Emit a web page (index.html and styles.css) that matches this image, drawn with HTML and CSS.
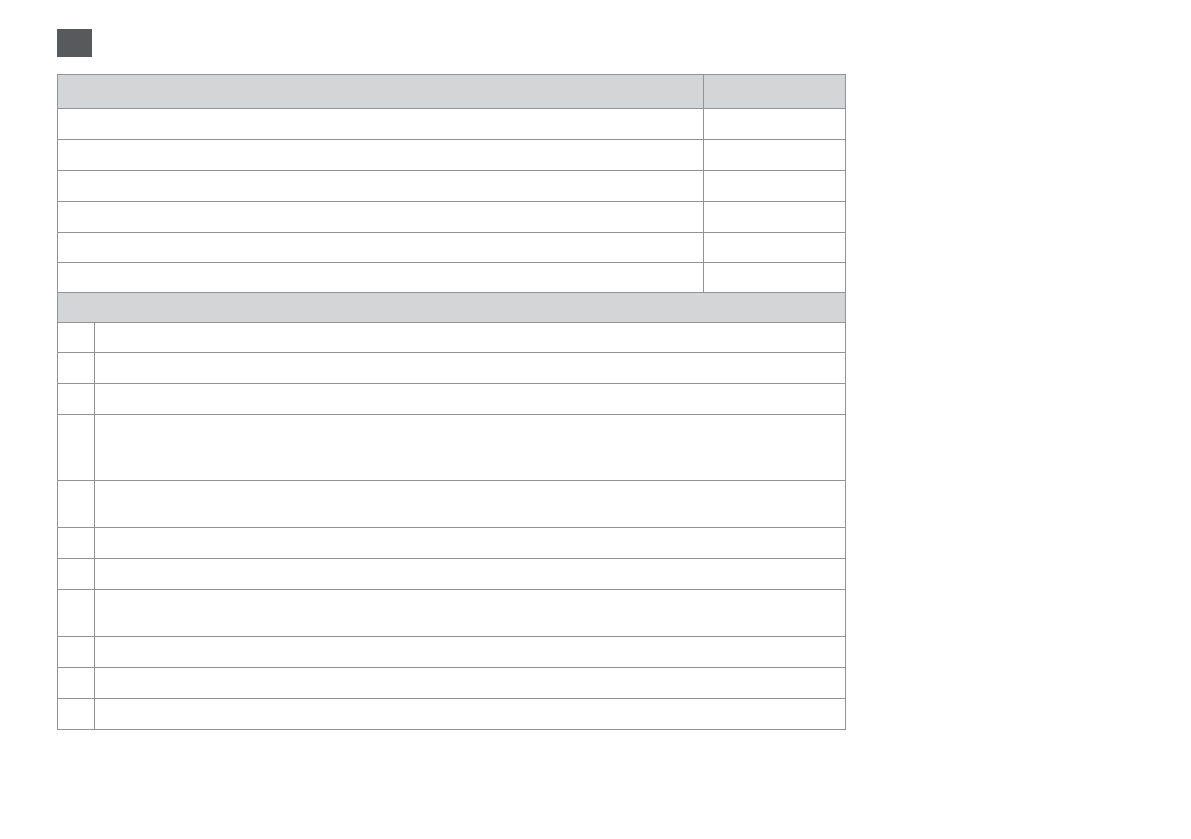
FILE: index.html
```html
<!DOCTYPE html>
<html>
<head>
<meta charset="utf-8">
<link rel="stylesheet" href="styles.css">
</head>
<body>
<div class="page">
  <div class="tab"></div>
  <div class="tbl">
    <div class="row head top"><div class="c-main"></div><div class="c-side"></div></div>
    <div class="row top h31"><div class="c-main"></div><div class="c-side"></div></div>
    <div class="row top h31"><div class="c-main"></div><div class="c-side"></div></div>
    <div class="row top h31"><div class="c-main"></div><div class="c-side"></div></div>
    <div class="row top h31"><div class="c-main"></div><div class="c-side"></div></div>
    <div class="row top h30"><div class="c-main"></div><div class="c-side"></div></div>
    <div class="row top h30"><div class="c-main"></div><div class="c-side"></div></div>
    <div class="row head2 h30"></div>
    <div class="row list h30"><div class="c-num"></div><div class="c-text"></div></div>
    <div class="row list h31"><div class="c-num"></div><div class="c-text"></div></div>
    <div class="row list h31"><div class="c-num"></div><div class="c-text"></div></div>
    <div class="row list h66"><div class="c-num"></div><div class="c-text"></div></div>
    <div class="row list h47"><div class="c-num"></div><div class="c-text"></div></div>
    <div class="row list h31"><div class="c-num"></div><div class="c-text"></div></div>
    <div class="row list h31"><div class="c-num"></div><div class="c-text"></div></div>
    <div class="row list h47"><div class="c-num"></div><div class="c-text"></div></div>
    <div class="row list h31"><div class="c-num"></div><div class="c-text"></div></div>
    <div class="row list h31"><div class="c-num"></div><div class="c-text"></div></div>
    <div class="row list h31"><div class="c-num"></div><div class="c-text"></div></div>
  </div>
</div>
</body>
</html>
```

FILE: styles.css
```css
html, body {
  margin: 0;
  padding: 0;
  background: #ffffff;
  font-family: "Liberation Sans", Arial, sans-serif;
}

.page {
  padding: 29px 0 0 57px;
}

.tab {
  width: 35px;
  height: 28px;
  background: #58595b;
}

.tbl {
  margin-top: 17px;
  width: 789px;
  box-sizing: border-box;
  border: 1px solid #939393;
  border-top: 0;
  display: flex;
  flex-direction: column;
}

.row {
  display: flex;
  box-sizing: border-box;
  border-top: 1px solid #939393;
}

.row.head {
  height: 34px;
  background: #d4d5d7;
}

.row.head2 {
  background: #d4d5d7;
}

.h30 { height: 30px; }
.h31 { height: 31px; }
.h47 { height: 47px; }
.h66 { height: 66px; }

.c-main {
  width: 645px;
  border-right: 1px solid #939393;
}

.c-side {
  flex: 1;
}

.c-num {
  width: 36px;
  border-right: 1px solid #939393;
}

.c-text {
  flex: 1;
}
```
